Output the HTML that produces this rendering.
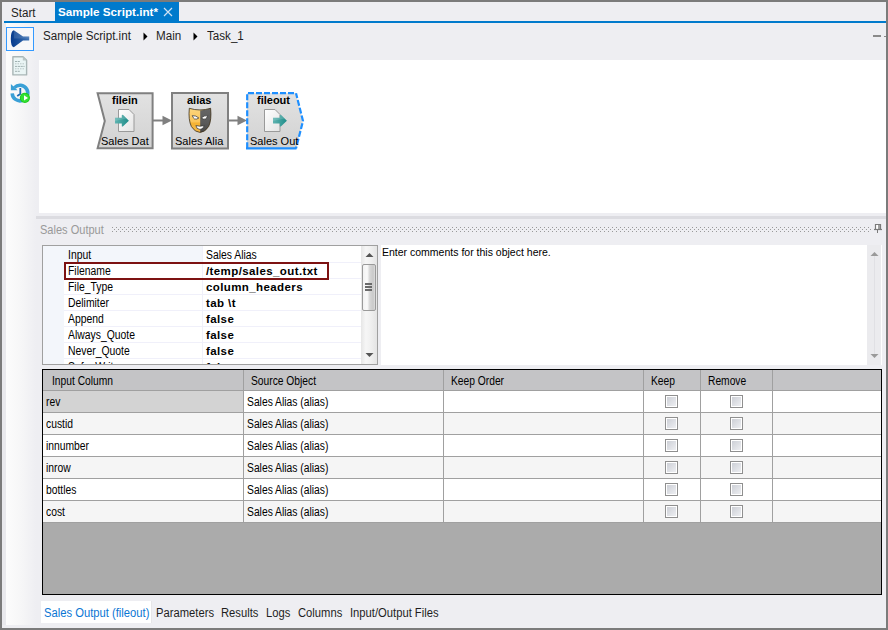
<!DOCTYPE html>
<html><head><meta charset="utf-8">
<style>
*{margin:0;padding:0;box-sizing:border-box}
html,body{width:888px;height:630px;overflow:hidden;background:#eeeef2;font-family:"Liberation Sans",sans-serif;}
.a{position:absolute}
.t{position:absolute;white-space:nowrap;line-height:1}
.pn{left:25px;font-size:12px;color:#000;transform:scaleX(0.865);transform-origin:0 0}
.pv{left:163px;font-size:12px;color:#000;transform:scaleX(0.865);transform-origin:0 0}
.b{font-weight:bold;font-size:11.5px;letter-spacing:0.4px;transform:none}
.gh{font-size:12px;color:#000;transform:scaleX(0.855);transform-origin:0 0}
.gc{font-size:12px;color:#000;transform:scaleX(0.86);transform-origin:0 0}
.bt{font-size:12px;color:#1e1e1e;transform:scaleX(0.935);transform-origin:0 0}
.cb{width:13px;height:13px;border:1px solid #8f8f8f;background:linear-gradient(135deg,#c9ccd3,#f1f2f5);box-shadow:inset 0 0 0 1px #fff}
#frame{left:0;top:0;width:888px;height:630px;border:2px solid #7b7b7b;}
</style></head><body>
<!-- window frame -->
<div class="a" style="left:0;top:0;width:888px;height:630px;background:#eeeef2"></div>

<!-- tab strip -->
<div class="a" style="left:55px;top:2px;width:124px;height:19px;background:#007acc"></div>
<div class="t" style="left:11px;top:7px;font-size:12.5px;color:#1e1e1e;transform:scaleX(0.93);transform-origin:0 0">Start</div>
<div class="t" style="left:58px;top:6px;font-size:11.7px;font-weight:bold;color:#fff">Sample Script.int*</div>
<svg class="a" style="left:163px;top:7px" width="10" height="10" viewBox="0 0 10 10"><path d="M1 1L9 9M9 1L1 9" stroke="#cfe2f3" stroke-width="1.2"/></svg>
<div class="a" style="left:4px;top:21px;width:882px;height:2px;background:#007acc"></div>

<!-- left sidebar -->
<div class="a" style="left:2px;top:23px;width:36px;height:602px;background:linear-gradient(to right,#e9e9ed 0px,#e9e9ed 3.5px,#fcfcfc 4px,#f6f6f7 20px,#eeeef2 34px)"></div>
<div class="a" style="left:6px;top:27px;width:28px;height:24px;border:1px solid #3399ff;background:#f7f7f9"></div>
<!-- run icon -->
<svg class="a" style="left:6px;top:27px" width="28" height="24" viewBox="6 27 28 24">
 <defs><linearGradient id="rg" x1="0" y1="0" x2="1" y2="0"><stop offset="0" stop-color="#073b8e"/><stop offset="0.45" stop-color="#1d529c"/><stop offset="1" stop-color="#3f74b6"/></linearGradient></defs>
 <path d="M13.8 30.2 Q10.8 30.8 10.8 38.7 Q10.8 46.8 13.8 47.3 L23 40.4 H29.2 V36.5 H23 Z" fill="url(#rg)"/>
 <path d="M13.8 30.2 L23 36.5 H29.2 V38.4 H14Z" fill="#ffffff" opacity="0.13"/>
</svg>
<!-- doc icon -->
<svg class="a" style="left:10px;top:54px" width="20" height="24" viewBox="10 54 20 24">
 <path d="M12.9 56.7 H23 L26.6 60.3 V74.9 H12.9Z" fill="#eaf5f5" stroke="#a9b6b6" stroke-width="1.4" stroke-linejoin="round"/>
 <path d="M22.8 56.6 V60.5 H26.7Z" fill="#b9c5c5"/>
 <path d="M15 61.5h4.8M15 66.4h9.6M15 71.3h4.8" stroke="#9fb0b0" stroke-width="1" stroke-dasharray="2.2 0.6"/>
 <path d="M15 63.8h9.6M15 68.8h9.6" stroke="#b8c6c6" stroke-width="1" stroke-dasharray="1.5 1"/>
</svg>
<!-- refresh icon -->
<svg class="a" style="left:8px;top:81px" width="24" height="24" viewBox="8 81 24 24">
 <path d="M14.4 87.6 A7.8 7.8 0 1 1 12.2 93.4" fill="none" stroke="#3aa0d6" stroke-width="3.5"/>
 <path d="M10.9 84 L17.6 90.3 H10.9Z" fill="#3aa0d6"/>
 <path d="M20.3 88 V94 L17.2 96" fill="none" stroke="#1d6fb5" stroke-width="1.8"/>
 <circle cx="24.9" cy="97.8" r="5.1" fill="#19c919"/>
 <circle cx="24.9" cy="97.8" r="4.3" fill="#33e033"/>
 <path d="M24 95.2 L28 97.9 L24 100.5Z" fill="#fff"/>
</svg>

<!-- breadcrumb -->
<div class="t" style="left:43px;top:29.5px;font-size:12.5px;color:#1e1e1e;transform:scaleX(0.93);transform-origin:0 0">Sample Script.int</div>
<svg class="a" style="left:143px;top:32px" width="5" height="9"><path d="M0.5 0.5 L4.5 4.5 L0.5 8.5Z" fill="#000"/></svg>
<div class="t" style="left:156px;top:29.5px;font-size:12.5px;color:#1e1e1e;transform:scaleX(0.93);transform-origin:0 0">Main</div>
<svg class="a" style="left:193px;top:32px" width="5" height="9"><path d="M0.5 0.5 L4.5 4.5 L0.5 8.5Z" fill="#000"/></svg>
<div class="t" style="left:207px;top:29.5px;font-size:12.5px;color:#1e1e1e;transform:scaleX(0.93);transform-origin:0 0">Task_1</div>
<div class="a" style="left:873px;top:35px;width:8px;height:2px;background:#8a8a8a"></div>
<div class="a" style="left:884px;top:36px;width:2px;height:1px;background:#8a8a8a"></div>

<!-- canvas -->
<div id="canvas" class="a" style="left:39px;top:60px;width:847px;height:153px;background:#fff"></div>

<!-- nodes -->
<svg class="a" style="left:38px;top:60px" width="300" height="153" viewBox="38 60 300 153">
 <defs>
  <linearGradient id="ng" x1="0" y1="0" x2="0" y2="1"><stop offset="0" stop-color="#e2e2e2"/><stop offset="1" stop-color="#d2d2d2"/></linearGradient>
  <linearGradient id="pg" x1="0" y1="0" x2="1" y2="1"><stop offset="0" stop-color="#ffffff"/><stop offset="1" stop-color="#e4e4e4"/></linearGradient>
  <linearGradient id="tg" x1="0" y1="0" x2="1" y2="0"><stop offset="0" stop-color="#5fb3b0"/><stop offset="1" stop-color="#1f8e8a"/></linearGradient>
 </defs>
 <!-- connectors -->
 <path d="M153 120.5 H164" stroke="#808080" stroke-width="2"/>
 <path d="M162.5 115.8 L172 120.5 L162.5 125.2Z" fill="#808080"/>
 <path d="M228 120.5 H239" stroke="#808080" stroke-width="2"/>
 <path d="M237.5 115.8 L247 120.5 L237.5 125.2Z" fill="#808080"/>
 <!-- filein -->
 <path d="M97.6 93.2 H152.6 V148.3 H97.6 L104.8 121Z" fill="url(#ng)" stroke="#808080" stroke-width="2"/>
 <!-- alias -->
 <rect x="172" y="93" width="56" height="55.5" fill="url(#ng)" stroke="#808080" stroke-width="2"/>
 <!-- fileout -->
 <path d="M247 93 H296 L303 121 L296 148.5 H247Z" fill="url(#ng)"/>
 <g stroke="#1e8fff" stroke-width="2.2" fill="none">
  <path d="M246 93.2 H296" stroke-dasharray="6 2" stroke-dashoffset="6"/>
  <path d="M296 93.2 L303 121 L296 148.5" stroke-dasharray="6 2" stroke-dashoffset="1"/>
  <path d="M246 148.4 H296.5"/>
  <path d="M247.2 92.2 V149.5" stroke-dasharray="6 2" stroke-dashoffset="6"/>
 </g>
 <!-- filein icon -->
 <path d="M118.5 109.5 H129 L134 114.5 V131.5 H118.5Z" fill="url(#pg)" stroke="#9a9a9a" stroke-width="1"/>
 <path d="M115 117.8 H121.8 V115.2 Q122.4 114.5 123.1 115 L128.9 120.7 L123.1 126.3 Q122.4 126.9 121.8 126.2 V123.6 H115Z" fill="url(#tg)"/><path d="M115 117.8 H121.8 V115.2 Q122.4 114.5 123.1 115 L126.6 118.5 Q120 119.5 115 121Z" fill="#fff" opacity="0.15"/>
 <!-- fileout icon -->
 <path d="M264.5 109.5 H275 L280 114.5 V131.5 H264.5Z" fill="url(#pg)" stroke="#9a9a9a" stroke-width="1"/>
 <g transform="translate(158 0)"><path d="M115 117.8 H121.8 V115.2 Q122.4 114.5 123.1 115 L128.9 120.7 L123.1 126.3 Q122.4 126.9 121.8 126.2 V123.6 H115Z" fill="url(#tg)"/><path d="M115 117.8 H121.8 V115.2 Q122.4 114.5 123.1 115 L126.6 118.5 Q120 119.5 115 121Z" fill="#fff" opacity="0.15"/></g>
 <!-- mask -->
 <defs><linearGradient id="mg" x1="0" y1="0" x2="0" y2="1"><stop offset="0" stop-color="#fcd57e"/><stop offset="0.55" stop-color="#fbc55a"/><stop offset="0.62" stop-color="#f5b333"/><stop offset="1" stop-color="#f3b84a"/></linearGradient>
 <linearGradient id="dg" x1="0" y1="0" x2="0" y2="1"><stop offset="0" stop-color="#666"/><stop offset="0.6" stop-color="#5a5a5a"/><stop offset="1" stop-color="#484848"/></linearGradient></defs>
 <path d="M189.3 108.3 Q200 111.6 210.6 108.3 Q211.8 120 208.6 126.6 Q205 132.4 200 132.4 Q195 132.4 191.4 126.6 Q188.2 120 189.3 108.3Z" fill="url(#mg)"/>
 <path d="M200.2 110.6 Q205.6 110.3 210.6 108.3 Q211.8 120 208.6 126.6 Q205 132.4 200.2 132.4Z" fill="url(#dg)"/>
 <path d="M189.3 108.3 Q200 111.6 210.6 108.3 Q211.8 120 208.6 126.6 Q205 132.4 200 132.4 Q195 132.4 191.4 126.6 Q188.2 120 189.3 108.3Z" fill="none" stroke="#3a3020" stroke-width="0.8"/>
 <path d="M192.3 115.6 Q196 115.4 198.8 118 Q196.8 119.6 194.6 119 Q192.8 117.8 192.3 115.6Z" fill="#fff" stroke="#2a2a2a" stroke-width="0.7"/>
 <path d="M207.7 115.6 Q204 115.4 201.2 118 Q203.2 119.6 205.4 119 Q207.2 117.8 207.7 115.6Z" fill="#fff" stroke="#2a2a2a" stroke-width="0.7"/>
 <path d="M195.9 125.6 Q200 126.8 204.1 125.6 Q203.5 129.4 200 129.4 Q196.5 129.4 195.9 125.6Z" fill="#fff" stroke="#2a2a2a" stroke-width="0.7"/>
</svg>
<div class="t" style="left:112px;top:95px;font-size:11px;font-weight:bold;color:#000">filein</div>
<div class="t" style="left:187px;top:95px;font-size:11px;font-weight:bold;color:#000">alias</div>
<div class="t" style="left:257px;top:95px;font-size:11px;font-weight:bold;color:#000">fileout</div>
<div class="t" style="left:101px;top:136px;font-size:11px;color:#000">Sales Dat</div>
<div class="t" style="left:175px;top:136px;font-size:11px;color:#000">Sales Alia</div>
<div class="t" style="left:250px;top:136px;font-size:11px;color:#000">Sales Out</div>

<!-- panel header -->
<div class="a" style="left:36px;top:216px;width:850px;height:3px;background:#dcdce1"></div>
<div class="t" style="left:40px;top:223.5px;font-size:12px;color:#999;transform:scaleX(0.92);transform-origin:0 0">Sales Output</div>
<div class="a" style="left:112px;top:227px;width:759px;height:6px;background-image:radial-gradient(circle at 0.5px 0.5px,#9a9a9a 0.7px,transparent 0.8px),radial-gradient(circle at 2.5px 2.5px,#9a9a9a 0.7px,transparent 0.8px);background-size:4px 4px"></div>
<svg class="a" style="left:874px;top:224px" width="8" height="10"><path d="M1.5 0.5 H6.5 V5.5 H1.5Z" fill="#fff" stroke="#7a7a7a" stroke-width="1.2"/><path d="M5 1 V5" stroke="#7a7a7a" stroke-width="1.4"/><path d="M0 5.5 H8" stroke="#7a7a7a" stroke-width="1.2"/><path d="M3.5 6 V9" stroke="#7a7a7a" stroke-width="1"/></svg>

<!-- properties grid -->
<div class="a" style="left:42px;top:245px;width:336px;height:120px;border:1px solid #a0a0a0;background:#fff;overflow:hidden">
 <div class="a" style="left:0;top:0;width:21px;height:118px;background:#f3f6fb"></div>
 <div class="a" style="left:21px;top:0;width:138px;height:16px;background:#f3f6fb"></div>
 <div class="a" style="left:159px;top:0;width:1px;height:118px;background:#f0f0fa"></div>
<div class="a" style="left:21px;top:16px;width:297px;height:1px;background:#f0f0fa"></div>
<div class="a" style="left:21px;top:32px;width:297px;height:1px;background:#f0f0fa"></div>
<div class="a" style="left:21px;top:48px;width:297px;height:1px;background:#f0f0fa"></div>
<div class="a" style="left:21px;top:64px;width:297px;height:1px;background:#f0f0fa"></div>
<div class="a" style="left:21px;top:80px;width:297px;height:1px;background:#f0f0fa"></div>
<div class="a" style="left:21px;top:96px;width:297px;height:1px;background:#f0f0fa"></div>
<div class="a" style="left:21px;top:112px;width:297px;height:1px;background:#f0f0fa"></div>
<div class="t pn" style="top:3px">Input</div>
<div class="t pv" style="top:3px">Sales Alias</div>
<div class="t pn" style="top:19px">Filename</div>
<div class="t pv b" style="top:20px">/temp/sales_out.txt</div>
<div class="t pn" style="top:35px">File_Type</div>
<div class="t pv b" style="top:36px">column_headers</div>
<div class="t pn" style="top:51px">Delimiter</div>
<div class="t pv b" style="top:52px">tab \t</div>
<div class="t pn" style="top:67px">Append</div>
<div class="t pv b" style="top:68px">false</div>
<div class="t pn" style="top:83px">Always_Quote</div>
<div class="t pv b" style="top:84px">false</div>
<div class="t pn" style="top:99px">Never_Quote</div>
<div class="t pv b" style="top:100px">false</div>
<div class="t pn" style="top:115px">Safe_Write</div>
<div class="t pv b" style="top:116px">false</div>
 <div class="a" style="left:21px;top:16px;width:265px;height:18px;border:2px solid #7d1212"></div>
 <!-- scrollbar -->
 <div class="a" style="left:318px;top:0;width:16px;height:118px;background:linear-gradient(to right,#e6e6e6,#f6f6f6 30%,#f0f0f0 60%,#e4e4e4)"></div>
 <svg class="a" style="left:322px;top:6px" width="9" height="6"><path d="M0.5 5 L4.5 1 L8.5 5Z" fill="#555"/></svg>
 <svg class="a" style="left:322px;top:106px" width="9" height="6"><path d="M0.5 1 L4.5 5 L8.5 1Z" fill="#555"/></svg>
 <div class="a" style="left:319px;top:18px;width:14px;height:47px;border:1px solid #9a9a9a;border-radius:2px;background:linear-gradient(to right,#f2f2f2,#fafafa 35%,#d8d8d8 55%,#c9c9c9 85%,#dedede)"></div>
 <div class="a" style="left:322px;top:37px;width:7px;height:2px;background:#6a6a6a"></div>
 <div class="a" style="left:322px;top:40px;width:7px;height:2px;background:#6a6a6a"></div>
 <div class="a" style="left:322px;top:43px;width:7px;height:2px;background:#6a6a6a"></div>
</div>
<!-- comments -->
<div class="a" style="left:381px;top:245px;width:501px;height:120px;background:#fff"></div>
<div class="t" style="left:382px;top:247px;font-size:11px;color:#000;transform:scaleX(0.955);transform-origin:0 0">Enter comments for this object here.</div>

<!-- comments scrollbar -->
<div class="a" style="left:867px;top:245px;width:14px;height:120px;background:#ebebee"></div>
<div class="a" style="left:874px;top:252px;width:1px;height:106px;background:#e0e0e4"></div>
<svg class="a" style="left:870px;top:251px" width="9" height="6"><path d="M0.5 5 L4.5 1 L8.5 5Z" fill="#9a9a9a"/></svg>
<svg class="a" style="left:870px;top:353px" width="9" height="6"><path d="M0.5 1 L4.5 5 L8.5 1Z" fill="#9a9a9a"/></svg>

<!-- columns grid -->
<div class="a" style="left:42px;top:369px;width:840px;height:226px;border:1px solid #000;background:#ababab;overflow:hidden">
 <div class="a" style="left:0;top:0;width:838px;height:20px;background:#c4c4c6"></div>
 <div class="a" style="left:0;top:20px;width:838px;height:1px;background:#a0a0a0"></div>
 <div class="t gh" style="left:9px;top:5px">Input Column</div>
 <div class="t gh" style="left:208px;top:5px">Source Object</div>
 <div class="t gh" style="left:408px;top:5px">Keep Order</div>
 <div class="t gh" style="left:608px;top:5px">Keep</div>
 <div class="t gh" style="left:665px;top:5px">Remove</div>
 <div class="a" style="left:0;top:21px;width:838px;height:21px;background:#ffffff"></div>
 <div class="a" style="left:0;top:21px;width:200px;height:21px;background:#d3d3d3"></div>
 <div class="a" style="left:0;top:42px;width:838px;height:1px;background:#a0a0a0"></div>
 <div class="t gc" style="left:3px;top:26px">rev</div>
 <div class="t gc" style="left:204px;top:26px">Sales Alias (alias)</div>
 <div class="a cb" style="left:622px;top:25px"></div>
 <div class="a cb" style="left:687px;top:25px"></div>
 <div class="a" style="left:0;top:43px;width:838px;height:21px;background:#f5f5f5"></div>
 <div class="a" style="left:0;top:64px;width:838px;height:1px;background:#a0a0a0"></div>
 <div class="t gc" style="left:3px;top:48px">custid</div>
 <div class="t gc" style="left:204px;top:48px">Sales Alias (alias)</div>
 <div class="a cb" style="left:622px;top:47px"></div>
 <div class="a cb" style="left:687px;top:47px"></div>
 <div class="a" style="left:0;top:65px;width:838px;height:21px;background:#ffffff"></div>
 <div class="a" style="left:0;top:86px;width:838px;height:1px;background:#a0a0a0"></div>
 <div class="t gc" style="left:3px;top:70px">innumber</div>
 <div class="t gc" style="left:204px;top:70px">Sales Alias (alias)</div>
 <div class="a cb" style="left:622px;top:69px"></div>
 <div class="a cb" style="left:687px;top:69px"></div>
 <div class="a" style="left:0;top:87px;width:838px;height:21px;background:#f5f5f5"></div>
 <div class="a" style="left:0;top:108px;width:838px;height:1px;background:#a0a0a0"></div>
 <div class="t gc" style="left:3px;top:92px">inrow</div>
 <div class="t gc" style="left:204px;top:92px">Sales Alias (alias)</div>
 <div class="a cb" style="left:622px;top:91px"></div>
 <div class="a cb" style="left:687px;top:91px"></div>
 <div class="a" style="left:0;top:109px;width:838px;height:21px;background:#ffffff"></div>
 <div class="a" style="left:0;top:130px;width:838px;height:1px;background:#a0a0a0"></div>
 <div class="t gc" style="left:3px;top:114px">bottles</div>
 <div class="t gc" style="left:204px;top:114px">Sales Alias (alias)</div>
 <div class="a cb" style="left:622px;top:113px"></div>
 <div class="a cb" style="left:687px;top:113px"></div>
 <div class="a" style="left:0;top:131px;width:838px;height:21px;background:#f5f5f5"></div>
 <div class="a" style="left:0;top:152px;width:838px;height:1px;background:#a0a0a0"></div>
 <div class="t gc" style="left:3px;top:136px">cost</div>
 <div class="t gc" style="left:204px;top:136px">Sales Alias (alias)</div>
 <div class="a cb" style="left:622px;top:135px"></div>
 <div class="a cb" style="left:687px;top:135px"></div>
 <div class="a" style="left:200px;top:0;width:1px;height:153px;background:#a0a0a0"></div>
 <div class="a" style="left:400px;top:0;width:1px;height:153px;background:#a0a0a0"></div>
 <div class="a" style="left:600px;top:0;width:1px;height:153px;background:#a0a0a0"></div>
 <div class="a" style="left:657px;top:0;width:1px;height:153px;background:#a0a0a0"></div>
 <div class="a" style="left:729px;top:0;width:1px;height:153px;background:#a0a0a0"></div>
</div>

<!-- bottom tabs -->
<div class="a" style="left:41px;top:601px;width:111px;height:22px;background:#fff;border-right:1px solid #e6e6e8"></div>
<div class="t bt" style="left:44px;top:607px;color:#0a76d4">Sales Output (fileout)</div>
<div class="t bt" style="left:156px;top:607px">Parameters</div>
<div class="t bt" style="left:221px;top:607px">Results</div>
<div class="t bt" style="left:266px;top:607px">Logs</div>
<div class="t bt" style="left:298px;top:607px">Columns</div>
<div class="t bt" style="left:350px;top:607px">Input/Output Files</div>

<!-- window border -->
<div class="a" style="left:0;top:0;width:888px;height:630px;border:2px solid #7b7b7b"></div>
</body></html>
